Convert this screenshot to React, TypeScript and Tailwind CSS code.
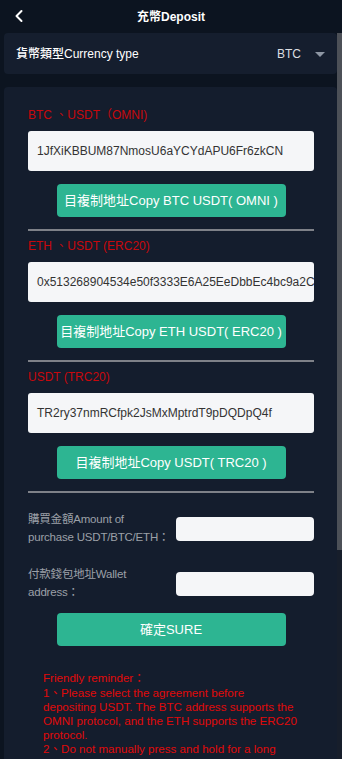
import { ChevronLeft } from "lucide-react"

type Channel = {
  label: string
  address: string
  button: string
}

const CHANNELS: Channel[] = [
  {
    label: "BTC 、USDT（OMNI)",
    address: "1JfXiKBBUM87NmosU6aYCYdAPU6Fr6zkCN",
    button: "目複制地址Copy BTC USDT( OMNI )",
  },
  {
    label: "ETH 、USDT (ERC20)",
    address: "0x513268904534e50f3333E6A25EeDbbEc4bc9a2C7",
    button: "目複制地址Copy ETH USDT( ERC20 )",
  },
  {
    label: "USDT (TRC20)",
    address: "TR2ry37nmRCfpk2JsMxMptrdT9pDQDpQ4f",
    button: "目複制地址Copy USDT( TRC20 )",
  },
]

const REMINDERS = [
  "1、Please select the agreement before depositing USDT. The BTC address supports the OMNI protocol, and the ETH supports the ERC20 protocol.",
  "2、Do not manually press and hold for a long time to copy the address, please click the copy button to avoid copying errors.",
  "3、After the transfer is completed, please fill in the purchase amount and the wallet address, then click SURE to submit.",
]

function ChannelBlock({ channel }: { channel: Channel }) {
  return (
    <div className="flex flex-col">
      <div className="h-4 text-[12px] leading-4 text-[#c8080c]">{channel.label}</div>
      <div className="mt-2 flex h-10 items-center overflow-hidden whitespace-nowrap rounded-[3px] bg-[#f5f6f8] pl-[9px] text-[12px] text-[#333333]">
        {channel.address}
      </div>
      <button className="mx-auto mt-[13px] flex h-[33px] w-[229px] items-center justify-center rounded-[4px] bg-[#2db592] text-[13px] text-white">
        {channel.button}
      </button>
      <div className="mt-3 h-[2px] bg-[#7e8188]" />
    </div>
  )
}

function FieldRow({ lines, className }: { lines: [string, string]; className?: string }) {
  return (
    <div className={`flex items-center ${className ?? ""}`}>
      <div className="min-w-0 flex-1 whitespace-nowrap text-[11.5px] leading-[17.5px] tracking-[-0.2px] text-[#9ca0a8]">
        {lines[0]}
        <br />
        {lines[1]}
      </div>
      <div className="h-[24px] w-[138px] shrink-0 rounded-[4px] bg-[#f5f6f8]" />
    </div>
  )
}

export default function App() {
  return (
    <div className="flex h-[759px] flex-col bg-[#0c1420] font-['Liberation_Sans','Noto_Sans_CJK_TC',sans-serif]">
      <header className="relative flex h-[33px] shrink-0 items-center justify-center">
        <ChevronLeft className="absolute left-[9px] top-[6px] h-[20px] w-[20px] text-white" strokeWidth={2.4} />
        <span className="text-[12px] font-bold text-white">充幣Deposit</span>
      </header>

      <div className="flex min-h-0 flex-1">
        <div className="min-w-0 flex-1 overflow-hidden">
          <div className="ml-1 flex h-[41px] items-center justify-between rounded-[4px] bg-[#151e2e] pl-3 pr-3">
            <span className="text-[12px] font-medium text-white">貨幣類型Currency type</span>
            <div className="flex items-center gap-[14px]">
              <span className="text-[12px] text-[#dcdee2]">BTC</span>
              <svg width="10" height="5" viewBox="0 0 10 5" className="mt-[1px]">
                <path d="M0 0h10L5 5z" fill="#8d96a3" />
              </svg>
            </div>
          </div>

          <div className="ml-1 mt-[13px] rounded-t-[4px] bg-[#141d2d] pb-[120px] pl-6 pr-[23px] pt-5">
            <div className="flex flex-col gap-[7px]">
              {CHANNELS.map((c) => (
                <ChannelBlock key={c.label} channel={c} />
              ))}
            </div>

            <FieldRow className="mt-[18px]" lines={["購買金額Amount of", "purchase USDT/BTC/ETH："]} />
            <FieldRow className="mt-5" lines={["付款錢包地址Wallet", "address："]} />

            <button className="mx-auto mt-3 flex h-[33px] w-[229px] items-center justify-center rounded-[4px] bg-[#2db592] text-[13px] text-white">
              確定SURE
            </button>

            <div className="ml-[15px] mt-[25px] w-[254px] text-[11.6px] leading-[14px] text-[#e00a0a]">
              <div className="mb-[1px]">Friendly reminder：</div>
              {REMINDERS.map((r) => (
                <p key={r}>{r}</p>
              ))}
            </div>
          </div>
        </div>

        <div className="w-[5px] shrink-0 bg-[#171e2b]">
          <div className="h-[517px] bg-[#4c5057]" />
        </div>
      </div>
    </div>
  )
}
